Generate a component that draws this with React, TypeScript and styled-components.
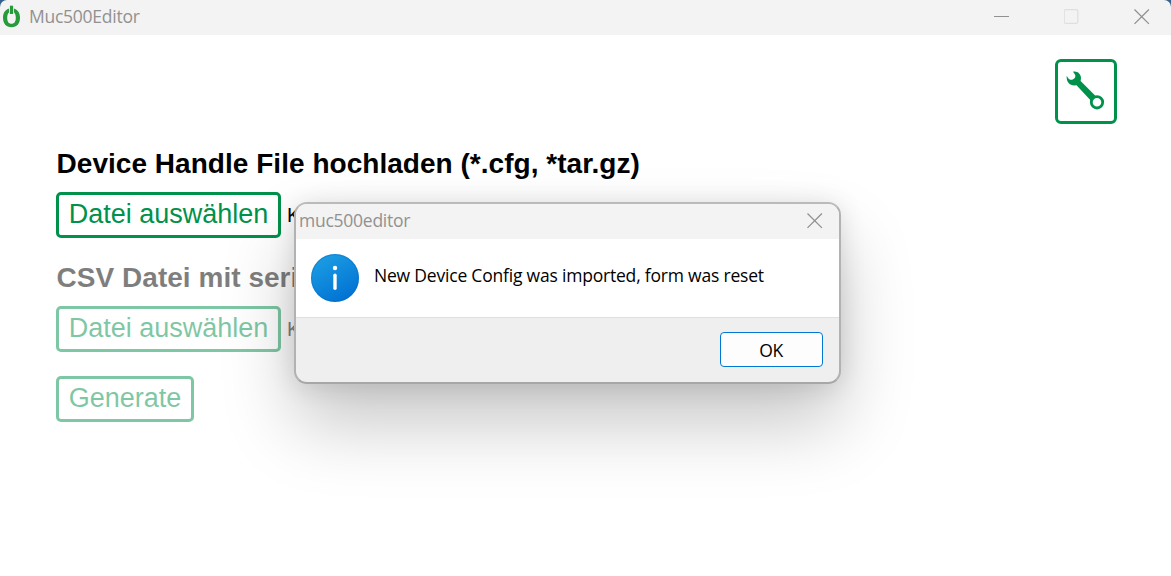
import React from "react";
import styled, { createGlobalStyle } from "styled-components";

const GlobalStyle = createGlobalStyle`
  * { box-sizing: border-box; }
  body { margin: 0; background: #fff; overflow: hidden; }
  button { font: inherit; cursor: pointer; }
  svg { display: block; flex: none; }
`;

const systemFont = `"Segoe UI", "Open Sans", "Noto Sans", sans-serif`;

const Window = styled.div`
  position: relative;
  display: flex;
  flex-direction: column;
  width: 1171px;
  height: 576px;
  overflow: hidden;
  background: #34618c;
  font-family: Arial, "Liberation Sans", sans-serif;
`;

const TitleBar = styled.header`
  display: flex;
  align-items: center;
  height: 35px;
  flex: none;
  padding: 0 21px 2px 3px;
  background: #f3f3f3;
  border-radius: 7px 7px 0 0;
`;

const TitleText = styled.span<{ $size: number; $spacing: number }>`
  flex: 1;
  padding-bottom: 2px;
  color: #919191;
  font-family: ${systemFont};
  font-size: ${(p) => p.$size}px;
  letter-spacing: ${(p) => p.$spacing}px;
  line-height: 24px;
  white-space: nowrap;
`;

const AppTitle = styled(TitleText)`
  margin-left: 9px;
`;

const WindowControls = styled.div`
  display: flex;
  align-items: center;
  gap: 55px;
`;

const Content = styled.main`
  position: relative;
  flex: 1;
  display: flex;
  flex-direction: column;
  padding: 24px 54px 0 56px;
  background: #fff;
`;

const SettingsButton = styled.button`
  display: flex;
  align-self: flex-end;
  align-items: center;
  justify-content: center;
  width: 62px;
  height: 65px;
  padding: 0;
  border: 3px solid #00914b;
  border-radius: 6px;
  background: #fff;
`;

const Section = styled.section<{ $disabled?: boolean; $top: number }>`
  margin-top: ${(p) => p.$top}px;
  opacity: ${(p) => (p.$disabled ? 0.5 : 1)};
`;

const Heading = styled.h2`
  margin: 0 0 12px;
  padding-left: 0.6px;
  font-size: 28px;
  letter-spacing: 0.03px;
  line-height: 32px;
  font-weight: 700;
  color: #000;
  white-space: nowrap;
`;

const FileRow = styled.div`
  display: flex;
  align-items: center;
  gap: 6px;
`;

const OutlineButton = styled.button<{ $width: number }>`
  width: ${(p) => p.$width}px;
  height: 46px;
  padding: 0 0 3px;
  border: 3px solid #00914b;
  border-radius: 5px;
  background: #fff;
  color: #00914b;
  font-size: 27px;
  line-height: 36px;
  white-space: nowrap;
`;

const FileName = styled.span`
  font-size: 20px;
  line-height: 24px;
  white-space: nowrap;
`;

const Dialog = styled.div`
  position: absolute;
  left: 294px;
  top: 202px;
  width: 547px;
  height: 182px;
  display: flex;
  flex-direction: column;
  overflow: hidden;
  border: 2px solid;
  border-color: #bababa #b2b2b2 #a7a7a7 #b2b2b2;
  border-radius: 13px;
  background: #efefef;
  font-family: ${systemFont};
  box-shadow: 0 40px 72px rgba(0, 0, 0, 0.22), 0 2px 26px rgba(0, 0, 0, 0.12);
`;

const DialogTitleBar = styled.div`
  display: flex;
  align-items: center;
  height: 35px;
  flex: none;
  padding: 0 16px 2px 3px;
  background: #f3f3f3;
`;

const DialogBody = styled.div`
  display: flex;
  align-items: center;
  height: 79px;
  flex: none;
  padding-left: 15px;
  gap: 15px;
  border-bottom: 1px solid #dfdfdf;
  background: #fff;
`;

const Message = styled.p`
  margin: 0 0 6px;
  font-size: 17.5px;
  letter-spacing: -0.2px;
  line-height: 24px;
  color: #000;
  white-space: nowrap;
`;

const DialogFooter = styled.div`
  display: flex;
  justify-content: flex-end;
  padding: 14px 16px 0 0;
`;

const OkButton = styled.button`
  width: 103px;
  height: 35px;
  padding: 0 1px 0 0;
  border: 1px solid #0078d4;
  border-radius: 4px;
  background: #fdfdfd;
  color: #000;
  font-size: 17.5px;
  letter-spacing: -0.5px;
  line-height: 24px;
`;

const PowerIcon = () => (
  <svg width="17" height="24" viewBox="0 0 17 24" fill="none">
    <path
      d="M6.2 3.4v3.9C4.8 8.3 4.2 10.300 4.200 12.800c0 3.900 1.400 6 4.300 6s4.300-2.100 4.300-6c0-2.500-.6-4.500-2-5.500V3.400c4 1 6.200 4.600 6.200 9.400 0 5.900-3.100 9.500-8.500 9.500S0 18.700 0 12.800c0-4.800 2.200-8.400 6.200-9.400z"
      fill="#279b3b"
    />
    <path d="M8.500.2v9" stroke="#f3f3f3" strokeWidth="4.800" />
    <path d="M8.500.7v8.300" stroke="#279b3b" strokeWidth="3.200" />
  </svg>
);

const CloseIcon = () => (
  <svg width="16" height="16" viewBox="0 0 16 16" fill="none" stroke="#919191" strokeWidth="1.3">
    <path d="M.5.5l14.4 14.4M14.9.5L.5 14.9" />
  </svg>
);

const MinimizeIcon = () => (
  <svg width="15" height="15" viewBox="0 0 15 15">
    <path d="M0 7.5h15" stroke="#919191" />
  </svg>
);

const MaximizeIcon = () => (
  <svg width="15" height="15" viewBox="0 0 15 15">
    <rect x=".2" y=".7" width="13.6" height="13.6" rx="1.5" fill="none" stroke="#dfdfdf" strokeWidth="1.3" />
  </svg>
);

const WrenchIcon = () => (
  <svg width="40" height="42" viewBox="0 0 40 42" fill="none">
    <path
      d="M7 .7C11.400-.2 15 2.800 15 7.300L14.600 9.900 29.600 25 25 29.700 10.500 14.200 8.200 14.400C3.700 14.400.6 10.900.7 6.500 0 5.300.9 5.200 1.500 5.900 2.400 8 4.200 9.200 6.200 8.700 8.700 8.100 9.900 5.700 9.100 3.800z"
      fill="#00914b"
    />
    <circle cx="31" cy="31.300" r="5.700" fill="#fff" stroke="#00914b" strokeWidth="2.800" />
  </svg>
);

const InfoIcon = () => (
  <svg width="48" height="48" viewBox="0 0 48 48">
    <defs>
      <linearGradient id="info" x1=".2" y1="0" x2=".75" y2="1">
        <stop offset="0" stopColor="#1d9fe4" />
        <stop offset="1" stopColor="#0070d2" />
      </linearGradient>
    </defs>
    <circle cx="24" cy="24" r="24" fill="url(#info)" />
    <circle cx="24" cy="24" r="23.4" fill="none" stroke="#0869b8" strokeOpacity=".35" strokeWidth="1.2" />
    <circle cx="24" cy="14" r="2.2" fill="#fff" />
    <path d="M24 21.2v13" stroke="#fff" strokeWidth="3.4" strokeLinecap="round" />
  </svg>
);

export default function App() {
  return (
    <Window>
      <GlobalStyle />
      <TitleBar>
        <PowerIcon />
        <AppTitle $size={17.5} $spacing={-0.25}>Muc500Editor</AppTitle>
        <WindowControls>
          <MinimizeIcon />
          <MaximizeIcon />
          <CloseIcon />
        </WindowControls>
      </TitleBar>
      <Content>
        <SettingsButton aria-label="Einstellungen">
          <WrenchIcon />
        </SettingsButton>
        <Section $top={24}>
          <Heading>Device Handle File hochladen (*.cfg, *tar.gz)</Heading>
          <FileRow>
            <OutlineButton $width={225}>Datei auswählen</OutlineButton>
            <FileName>K</FileName>
          </FileRow>
        </Section>
        <Section $top={24} $disabled>
          <Heading>CSV Datei mit seri</Heading>
          <FileRow>
            <OutlineButton $width={225} disabled>Datei auswählen</OutlineButton>
            <FileName>K</FileName>
          </FileRow>
        </Section>
        <Section $top={24} $disabled>
          <OutlineButton $width={138} disabled>Generate</OutlineButton>
        </Section>
      </Content>
      <Dialog role="dialog">
        <DialogTitleBar>
          <TitleText $size={17.5} $spacing={-0.25}>muc500editor</TitleText>
          <CloseIcon />
        </DialogTitleBar>
        <DialogBody>
          <InfoIcon />
          <Message>New Device Config was imported, form was reset</Message>
        </DialogBody>
        <DialogFooter>
          <OkButton>OK</OkButton>
        </DialogFooter>
      </Dialog>
    </Window>
  );
}
